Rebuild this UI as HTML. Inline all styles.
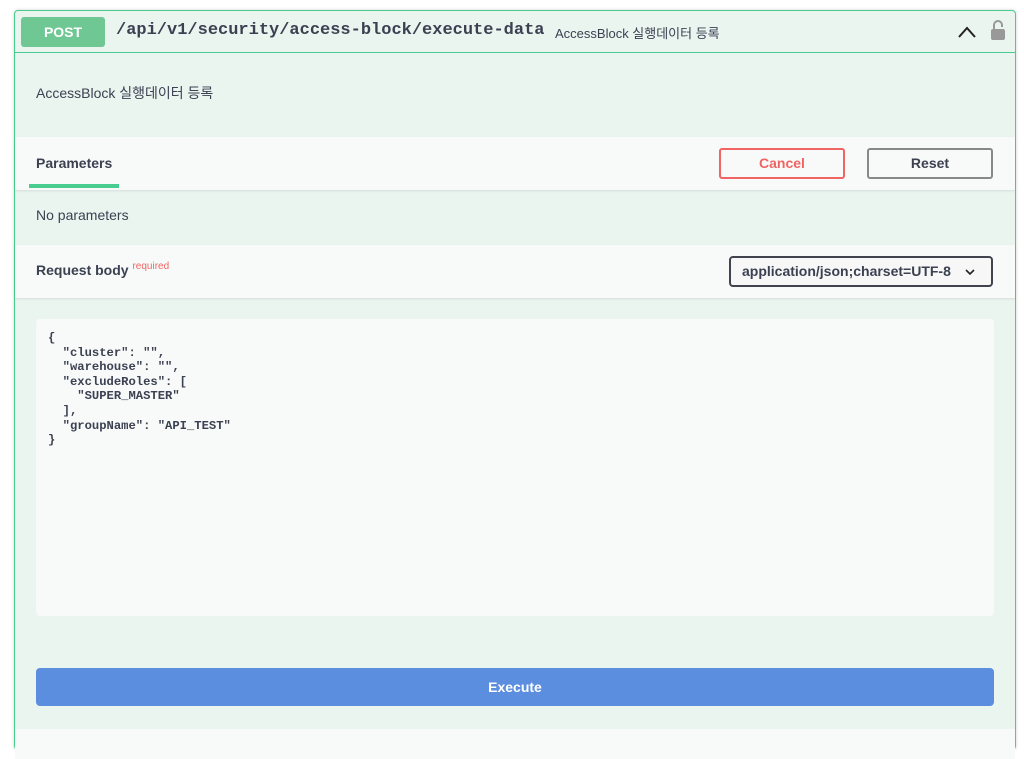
<!DOCTYPE html>
<html><head><meta charset="utf-8"><style>
*{box-sizing:border-box;margin:0;padding:0}
body{width:1024px;height:737px;background:#fff;font-family:"Liberation Sans","Noto Sans CJK KR",sans-serif;color:#3b4151;overflow:hidden;position:relative}
.op{position:absolute;left:14px;top:10px;width:1002px;height:740px;border:1px solid #49cc90;border-radius:4px;background:#ebf5f0;box-shadow:0 0 3px rgba(0,0,0,.19)}
.hdr{position:absolute;left:0;top:0;width:1000px;height:42px;border-bottom:1px solid #49cc90}
.badge{position:absolute;left:6px;top:6px;width:84px;height:30px;background:#6fc893;border-radius:3px;color:#fff;font-weight:bold;font-size:14px;text-align:center;line-height:30px}
.path{position:absolute;left:101px;top:10px;font-family:"Liberation Mono",monospace;font-weight:bold;font-size:17px;color:#3b4151}
.sum{position:absolute;left:540px;top:12px;font-size:13px}
.desc{position:absolute;left:21px;top:72px;font-size:14px}
.bar{position:absolute;left:0;width:1000px;height:53px;background:#f8faf9;box-shadow:0 1px 2px rgba(0,0,0,.1)}
.btn{position:absolute;top:11px;width:126px;height:31px;border:2px solid #888;border-radius:3px;background:transparent;font-weight:bold;font-size:14px;text-align:center;line-height:27px}
.ta{position:absolute;left:21px;top:308px;width:958px;height:297px;background:#f8f9f9;border-radius:4px;padding:12px 12px;font-family:"Liberation Mono",monospace;font-weight:bold;font-size:12.2px;line-height:14.6px;white-space:pre;color:#3b4151}
.exec{position:absolute;left:21px;top:657px;width:958px;height:38px;background:#5b8edf;border-radius:4px;color:#fff;font-weight:bold;font-size:14px;text-align:center;line-height:38px}
</style></head><body>
<div class="op">
 <div class="hdr">
  <div class="badge">POST</div>
  <div class="path">/api/v1/security/access-block/execute-data</div>
  <div class="sum">AccessBlock 실행데이터 등록</div>
  <svg style="position:absolute;left:942px;top:14px" width="20" height="14" viewBox="0 0 20 14"><path d="M2 12 L10 3 L18 12" fill="none" stroke="#222" stroke-width="2"/></svg>
  <svg style="position:absolute;left:975px;top:8px" width="16" height="22" viewBox="0 0 16 22"><path d="M4 10 V6 a4 4 0 0 1 8 0 V8" fill="none" stroke="#999" stroke-width="2"/><rect x="1" y="10" width="14" height="11" rx="2" fill="#999"/></svg>
 </div>
 <div class="desc">AccessBlock 실행데이터 등록</div>
 <div class="bar" style="top:126px">
  <div style="position:absolute;left:21px;top:18px;font-size:14px;font-weight:bold">Parameters</div>
  <div style="position:absolute;left:14px;top:47px;width:90px;height:4px;background:#49cc90"></div>
  <div class="btn" style="left:704px;border-color:#f06464;color:#f06464">Cancel</div>
  <div class="btn" style="left:852px">Reset</div>
 </div>
 <div style="position:absolute;left:21px;top:196px;font-size:14px">No parameters</div>
 <div class="bar" style="top:234px">
  <div style="position:absolute;left:21px;top:17px;font-size:14px;font-weight:bold">Request body <span style="color:#f06464;font-size:10px;font-weight:normal;position:relative;top:-6px">required</span></div>
  <div style="position:absolute;left:714px;top:11px;width:264px;height:31px;border:2px solid #41444e;border-radius:4px;background:#f7f7f7;font-size:14px;font-weight:bold;line-height:27px;padding-left:11px">application/json;charset=UTF-8<svg style="position:absolute;left:234px;top:10px" width="10" height="8" viewBox="0 0 10 8"><path d="M1 2 L5 6 L9 2" fill="none" stroke="#222" stroke-width="1.6"/></svg></div>
 </div>
 <div class="ta">{
  "cluster": "",
  "warehouse": "",
  "excludeRoles": [
    "SUPER_MASTER"
  ],
  "groupName": "API_TEST"
}</div>
 <div class="exec">Execute</div>
 <div style="position:absolute;left:0;top:718px;width:1000px;height:30px;background:#f8faf9"></div>
</div>
</body></html>
